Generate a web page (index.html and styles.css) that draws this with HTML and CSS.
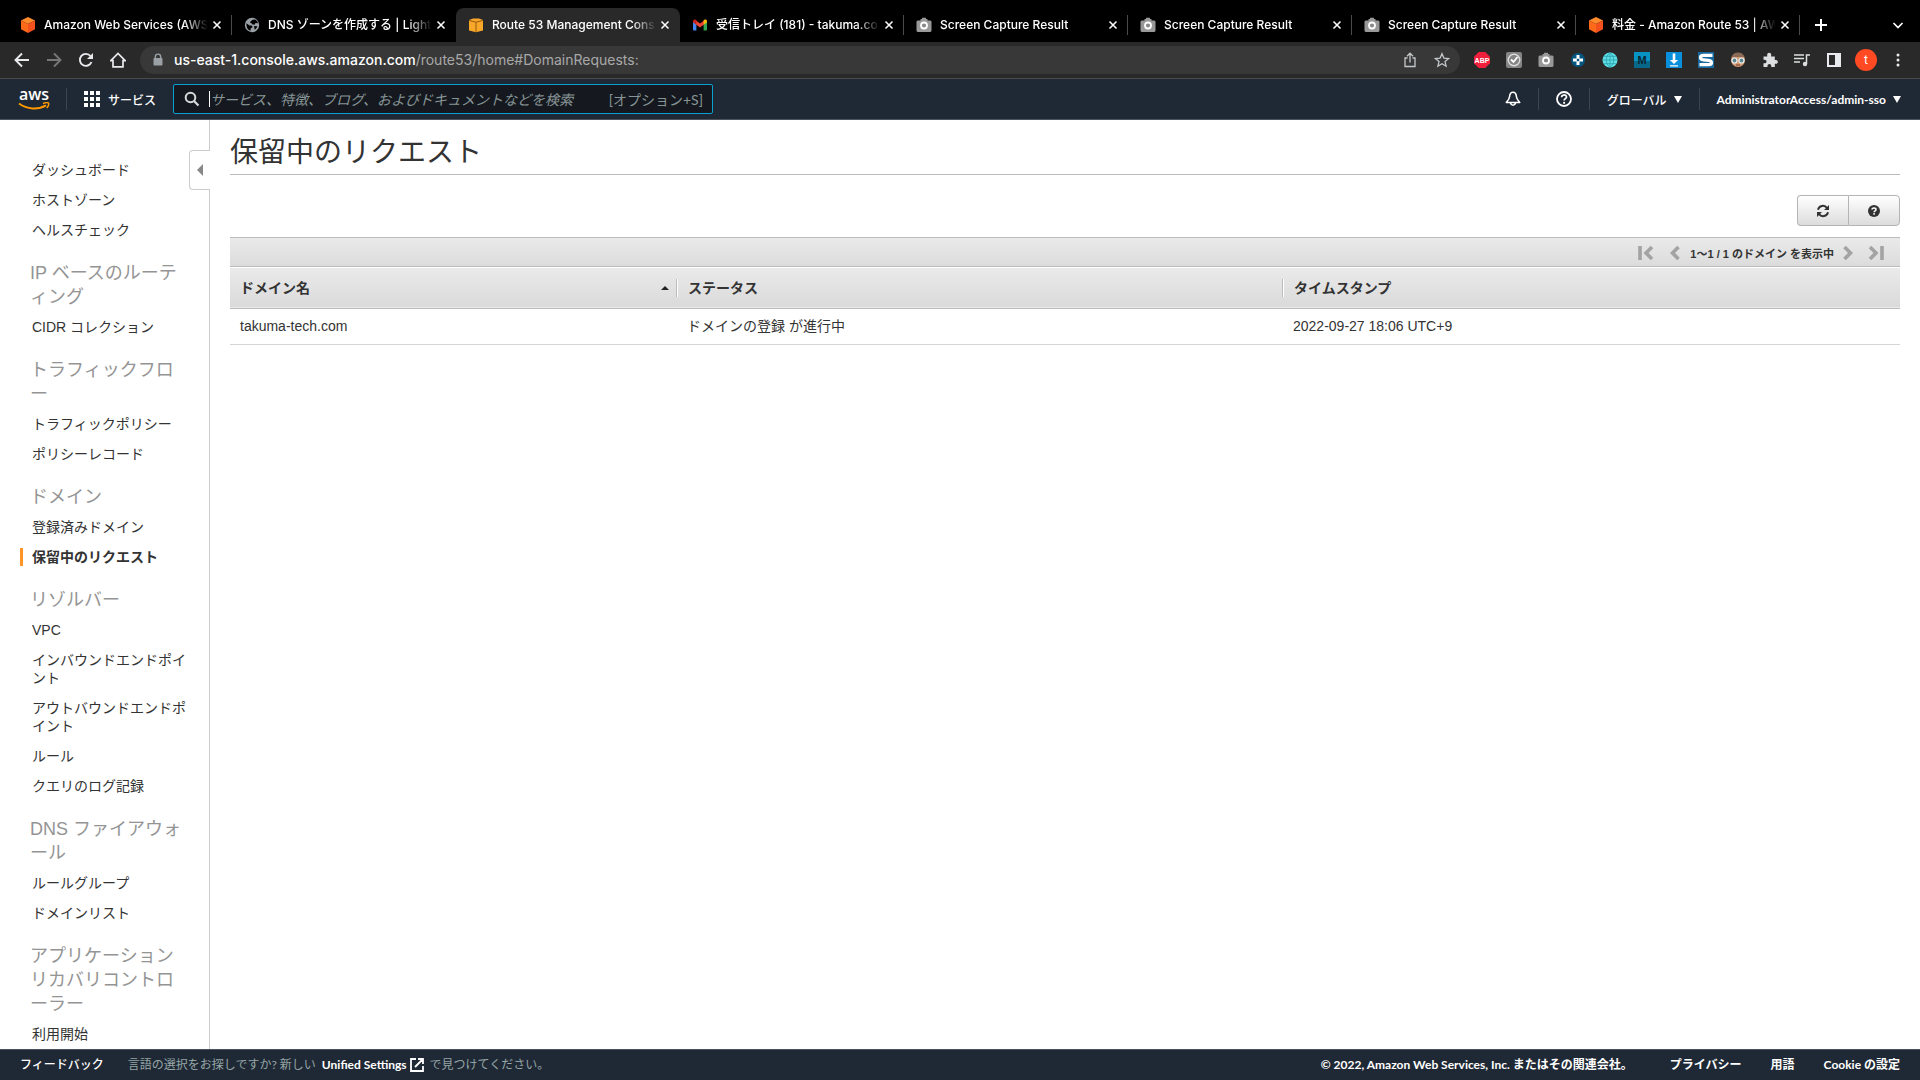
FILE: index.html
```
<!DOCTYPE html>
<html lang="ja">

<head>
    <meta charset="utf-8">
    <title>Route 53 Management Console</title>
    <link rel="stylesheet" href="styles.css">
</head>

<body>
    <svg class="sprite" aria-hidden="true">
        <symbol id="cube" viewBox="0 0 16 16">
            <path fill="#ff8a2b" d="M8 0l7 3.6L8 7 1 3.6z" />
            <path fill="#ff6a1a" d="M1 3.6L8 7v9l-7-3.8z" />
            <path fill="#f4511e" d="M15 3.6L8 7v9l7-3.8z" />
        </symbol>
        <symbol id="globe" viewBox="0 0 16 16">
            <circle cx="8" cy="8" r="7.2" fill="#9aa0a6" />
            <path fill="#000" d="M2.5 6.2l3 2.4h2.2l1 1.6-1.9 1-.3 2.6C3.800 13 2 10.500 2.500 6.200zM6.500 4.600l2-1.800 2.600-.3c1.500.8 2.600 2.200 3 3.800l-2.500-.3-1.100 1.700-2.500-.5-.6-1.200-1.500-.3zM10 9l3.400.3c-.5 1.500-1.400 2.600-2.700 3.400z" />
        </symbol>
        <symbol id="camera" viewBox="0 0 16 16">
            <path fill="#999" d="M1.500 3.500H4.500V2H6V.8h4V2h1.500v1.500h3l1 1V14l-1 1H1.500l-1-1V4.500z" />
            <circle cx="8" cy="8.500" r="3" fill="#888" stroke="#fff" stroke-width="1.800" />
        </symbol>
        <symbol id="close" viewBox="0 0 10 10">
            <path d="M1.500 1.500l7 7M8.500 1.500l-7 7" stroke="#fff" stroke-width="1.500" fill="none" />
        </symbol>
    </svg>

    <div class="tabStrip">
        <div class="tab">
            <svg class="favicon"><use href="#cube" /></svg>
            <span class="tabTitle">Amazon Web Services (AWS</span>
            <button class="tabClose" aria-label="閉じる"><svg><use href="#close" /></svg></button>
        </div>
        <div class="tab tab--beforeActive">
            <svg class="favicon"><use href="#globe" /></svg>
            <span class="tabTitle">DNS ゾーンを作成する | Lights</span>
            <button class="tabClose" aria-label="閉じる"><svg><use href="#close" /></svg></button>
        </div>
        <div class="tab tab--active">
            <svg class="favicon" viewBox="0 0 16 16">
                <path fill="#f9a72b" d="M1 3l4-1.500h6L15 3v10.500l-7 1.700-7-1.700z" />
                <path fill="none" stroke="#8a5208" stroke-width=".9" d="M1 3.500l7 1.700 7-1.700M8 5.200V15" />
            </svg>
            <span class="tabTitle">Route 53 Management Cons</span>
            <button class="tabClose" aria-label="閉じる"><svg><use href="#close" /></svg></button>
        </div>
        <div class="tab">
            <svg class="favicon" viewBox="0 0 16 16">
                <path fill="#4285f4" d="M1 4v8.500a1 1 0 0 0 1 1h2.400V7z" />
                <path fill="#34a853" d="M15 4v8.500a1 1 0 0 1-1 1h-2.400V7z" />
                <path fill="#ea4335" d="M3 2.800L8 6.500l5-3.700v4L8 10.500 3 6.800z" />
                <path fill="#c5221f" d="M1 4.200C1 2.500 2.900 1.800 4.400 3v4.800L1 5.200z" />
                <path fill="#fbbc04" d="M15 4.200c0-1.700-1.900-2.400-3.400-1.200v4.800L15 5.200z" />
            </svg>
            <span class="tabTitle">受信トレイ (181) - takuma.co</span>
            <button class="tabClose" aria-label="閉じる"><svg><use href="#close" /></svg></button>
        </div>
        <div class="tab">
            <svg class="favicon"><use href="#camera" /></svg>
            <span class="tabTitle">Screen Capture Result</span>
            <button class="tabClose" aria-label="閉じる"><svg><use href="#close" /></svg></button>
        </div>
        <div class="tab">
            <svg class="favicon"><use href="#camera" /></svg>
            <span class="tabTitle">Screen Capture Result</span>
            <button class="tabClose" aria-label="閉じる"><svg><use href="#close" /></svg></button>
        </div>
        <div class="tab">
            <svg class="favicon"><use href="#camera" /></svg>
            <span class="tabTitle">Screen Capture Result</span>
            <button class="tabClose" aria-label="閉じる"><svg><use href="#close" /></svg></button>
        </div>
        <div class="tab">
            <svg class="favicon"><use href="#cube" /></svg>
            <span class="tabTitle">料金 - Amazon Route 53 | AW</span>
            <button class="tabClose" aria-label="閉じる"><svg><use href="#close" /></svg></button>
        </div>
        <button class="stripButton" aria-label="新しいタブ">
            <svg width="14" height="14" viewBox="0 0 14 14"><path d="M7 1v12M1 7h12" stroke="#fff" stroke-width="2" /></svg>
        </button>
        <button class="stripButton stripButton--end" aria-label="タブを検索">
            <svg width="12" height="12" viewBox="0 0 12 12"><path d="M1.500 4L6 8.500 10.500 4" stroke="#fff" stroke-width="1.700" fill="none" /></svg>
        </button>
    </div>

    <div class="toolbar">
        <button class="toolButton" aria-label="戻る">
            <svg viewBox="0 0 16 16"><path d="M15 8H2M8 1.500L1.500 8 8 14.500" stroke="#e8eaed" stroke-width="1.900" fill="none" /></svg>
        </button>
        <button class="toolButton" aria-label="進む">
            <svg viewBox="0 0 16 16"><path d="M1 8h13M8 1.500L14.500 8 8 14.500" stroke="#777" stroke-width="1.900" fill="none" /></svg>
        </button>
        <button class="toolButton" aria-label="再読み込み">
            <svg viewBox="0 0 16 16"><path d="M13.500 10A6 6 0 1 1 12.500 4" stroke="#e8eaed" stroke-width="1.900" fill="none" /><path d="M15 1v6H9z" fill="#e8eaed" /></svg>
        </button>
        <button class="toolButton" aria-label="ホーム">
            <svg viewBox="0 0 16 16"><path d="M.8 8.600L8 1.400l7.200 7.200H13v6.200H3V8.600z" stroke="#e8eaed" stroke-width="1.700" fill="none" /></svg>
        </button>
        <div class="omnibox">
            <svg class="lock" width="10" height="14" viewBox="0 0 10 14"><path d="M2.300 6V3.800a2.700 2.700 0 0 1 5.400 0V6" stroke="#9aa0a6" stroke-width="1.400" fill="none" /><rect x=".5" y="5" width="9" height="7.500" rx="1" fill="#9aa0a6" /></svg>
            <span class="url"><b>us-east-1.console.aws.amazon.com</b>/route53/home#DomainRequests:</span>
            <button class="toolButton" aria-label="共有">
                <svg viewBox="0 0 16 16"><path d="M5.500 6H3v8.500h10V6h-2.500M8 10.500V1.500M5 4.200l3-3 3 3" stroke="#c4c7ca" stroke-width="1.300" fill="none" /></svg>
            </button>
            <button class="toolButton" aria-label="ブックマーク">
                <svg viewBox="0 0 16 16"><path d="M8 1.700l1.900 4.400 4.700.4-3.600 3.100 1.100 4.600L8 11.800l-4.100 2.400L5 9.600 1.400 6.500l4.700-.4z" stroke="#c4c7ca" stroke-width="1.300" fill="none" /></svg>
            </button>
        </div>
        <div class="extensions">
            <button class="toolButton" aria-label="ABP">
                <svg viewBox="0 0 16 16"><path fill="#f0203c" d="M4.700 0h6.600L16 4.700v6.600L11.300 16H4.700L0 11.300V4.700z" /><text class="iconText" x="8" y="11" font-size="7" fill="#fff">ABP</text></svg>
            </button>
            <button class="toolButton" aria-label="チェック">
                <svg viewBox="0 0 16 16"><rect width="16" height="16" rx="2" fill="#858585" /><circle cx="8" cy="8" r="5.800" fill="none" stroke="#ddd" stroke-width="1.400" /><path d="M5 7.500L7.500 10l4-5" stroke="#fff" stroke-width="1.800" fill="none" /></svg>
            </button>
            <button class="toolButton" aria-label="キャプチャ"><svg><use href="#camera" /></svg></button>
            <button class="toolButton" aria-label="移動">
                <svg viewBox="0 0 16 16"><circle cx="8" cy="8" r="7" fill="#05557f" /><path fill="#fff" d="M6.500 3h3v3.500H13v3H9.500V13h-3V9.500H3v-3h3.500z" /><rect x="6.800" y="6.800" width="2.400" height="2.400" fill="#05557f" /></svg>
            </button>
            <button class="toolButton" aria-label="地球">
                <svg viewBox="0 0 16 16"><circle cx="8" cy="8" r="7.500" fill="#5fe0e4" /><path d="M.5 8h15M2 4.300h12M2 11.700h12M8 .5v15M8 .5c-5 4.500-5 10.500 0 15M8 .5c5 4.500 5 10.500 0 15" stroke="#2ba0ad" stroke-width=".8" fill="none" /></svg>
            </button>
            <button class="toolButton" aria-label="M">
                <svg viewBox="0 0 16 16"><rect width="16" height="16" fill="#0793c4" /><rect y="9" width="16" height="7" fill="#08688a" /><text class="iconText" x="8" y="12" font-size="11" fill="#0b2530">M</text></svg>
            </button>
            <button class="toolButton" aria-label="ダウンロード">
                <svg viewBox="0 0 16 16"><rect width="16" height="16" fill="#0a8fdc" /><path fill="#fff" d="M6.700 1.500h2.600V8h2.800L8 12 3.900 8h2.800zM4 13.300h8v1.200H4z" /></svg>
            </button>
            <button class="toolButton" aria-label="S">
                <svg viewBox="0 0 16 16"><rect width="16" height="16" fill="#17699f" /><path d="M14.500 3.300H5.500C1.500 3.300 1.500 7.500 5.500 7.800l5 .6c4 .5 4 4.300 0 4.300H1.500" stroke="#fff" stroke-width="3.200" fill="none" /></svg>
            </button>
            <button class="toolButton" aria-label="アバター">
                <svg viewBox="0 0 16 16"><circle cx="8" cy="8" r="7" fill="#d39b74" /><path d="M1.500 5A7 7 0 0 1 14.500 5z" fill="#8a6a55" /><circle cx="4.500" cy="8.500" r="2.500" fill="#5c8790" stroke="#e8eff0" stroke-width="1.200" /><circle cx="11.500" cy="8.500" r="2.500" fill="#5c8790" stroke="#e8eff0" stroke-width="1.200" /><path d="M6 13h4" stroke="#743c30" /></svg>
            </button>
            <button class="toolButton" aria-label="拡張機能">
                <svg viewBox="0 0 16 16"><path fill="#dcdee0" d="M1.500 4.500h3.800C4.600 1.700 6 .8 7.200.8s2.600.9 1.900 3.700h3.700v3.600c2.400-.4 3 .7 3 1.800s-.8 2.200-3 1.800V15H9.300c.3-2.300-.8-3-1.900-3s-2.300.7-1.900 3h-4v-3.700c2.400.3 3-.8 3-1.800s-.7-2-3-1.700z" /></svg>
            </button>
            <button class="toolButton" aria-label="メディア">
                <svg viewBox="0 0 16 16"><path d="M0 3h10M0 6.500h10M0 10h6M12.500 12V3h3.500" stroke="#dcdee0" stroke-width="1.500" fill="none" /><circle cx="11" cy="12" r="2.200" fill="#dcdee0" /></svg>
            </button>
            <button class="toolButton" aria-label="サイドパネル">
                <svg viewBox="0 0 16 16"><path fill="#e8eaed" fill-rule="evenodd" d="M1 1h14v14H1zM3 3v10h6V3z" /></svg>
            </button>
            <button class="avatar">t</button>
            <button class="toolButton" aria-label="メニュー">
                <svg viewBox="0 0 16 16" fill="#e8eaed"><circle cx="8" cy="3" r="1.500" /><circle cx="8" cy="8" r="1.500" /><circle cx="8" cy="13" r="1.500" /></svg>
            </button>
        </div>
    </div>

    <header class="awsHeader">
        <a href="#" class="awsLogo">
            <span>aws</span>
            <svg width="32" height="9" viewBox="0 0 32 9"><path d="M1 1.500c8 6 19 6.500 27 1.800" stroke="#f90" stroke-width="2" fill="none" /><path d="M25 1.500c3-1 5-.9 5.500-.4s.2 2.800-1.700 5" stroke="#f90" stroke-width="1.500" fill="none" /></svg>
        </a>
        <button class="services">
            <svg width="16" height="16" viewBox="0 0 16 16" fill="#fff"><path d="M0 0h4v4H0zM6 0h4v4H6zM12 0h4v4h-4zM0 6h4v4H0zM6 6h4v4H6zM12 6h4v4h-4zM0 12h4v4H0zM6 12h4v4H6zM12 12h4v4h-4z" /></svg>
            サービス
        </button>
        <label class="searchBox">
            <svg width="16" height="16" viewBox="0 0 16 16"><circle cx="6.500" cy="6.500" r="4.800" stroke="#d5dbdb" stroke-width="2" fill="none" /><path d="M10 10l4.500 4.500" stroke="#d5dbdb" stroke-width="2.200" /></svg>
            <span class="caret"></span>
            <input type="text" class="searchInput" aria-label="検索" placeholder="サービス、特徴、ブログ、およびドキュメントなどを検索">
            <span class="shortcut">[オプション+S]</span>
        </label>
        <div class="headerMenu">
            <button class="menuButton" aria-label="通知">
                <svg width="16" height="16" viewBox="0 0 16 16"><path d="M8 1.300c-2.200 0-3.200 1.900-3.400 4.200C4.400 8.200 3 9.500 1.300 11.500h13.400C13 9.500 11.600 8.200 11.400 5.500 11.200 3.200 10.200 1.300 8 1.300zM5.500 12a2.600 3 0 0 0 5 0" stroke="#fff" stroke-width="1.600" fill="none" stroke-linejoin="round" /></svg>
            </button>
            <button class="menuButton" aria-label="サポート">
                <svg width="16" height="16" viewBox="0 0 16 16"><circle cx="8" cy="8" r="7" stroke="#fff" stroke-width="1.800" fill="none" /><path d="M5.600 6.300C5.600 3.200 10.500 3.300 10.500 6c0 1.700-2.400 1.700-2.400 3.600" stroke="#fff" stroke-width="1.700" fill="none" /><circle cx="8.100" cy="11.800" r="1.100" fill="#fff" /></svg>
            </button>
            <button class="menuButton">グローバル <i class="arrow"></i></button>
            <button class="menuButton menuButton--account">AdministratorAccess/admin-sso <i class="arrow"></i></button>
        </div>
    </header>

    <div class="page">
        <nav class="sidebar">
            <button class="sidebarToggle" aria-label="メニューを閉じる"></button>
            <ul>
                <li><a href="#">ダッシュボード</a></li>
                <li><a href="#">ホストゾーン</a></li>
                <li><a href="#">ヘルスチェック</a></li>
            </ul>
            <h2>IP ベースのルーティング</h2>
            <ul>
                <li><a href="#">CIDR コレクション</a></li>
            </ul>
            <h2>トラフィックフロー</h2>
            <ul>
                <li><a href="#">トラフィックポリシー</a></li>
                <li><a href="#">ポリシーレコード</a></li>
            </ul>
            <h2>ドメイン</h2>
            <ul>
                <li><a href="#">登録済みドメイン</a></li>
                <li class="current"><a href="#">保留中のリクエスト</a></li>
            </ul>
            <h2>リゾルバー</h2>
            <ul>
                <li><a href="#">VPC</a></li>
                <li><a href="#">インバウンドエンドポイント</a></li>
                <li><a href="#">アウトバウンドエンドポイント</a></li>
                <li><a href="#">ルール</a></li>
                <li><a href="#">クエリのログ記録</a></li>
            </ul>
            <h2>DNS ファイアウォール</h2>
            <ul>
                <li><a href="#">ルールグループ</a></li>
                <li><a href="#">ドメインリスト</a></li>
            </ul>
            <h2>アプリケーションリカバリコントローラー</h2>
            <ul>
                <li><a href="#">利用開始</a></li>
            </ul>
        </nav>

        <main class="content">
            <h1>保留中のリクエスト</h1>
            <div class="actions">
                <button class="actionButton" aria-label="更新">
                    <svg width="14" height="14" viewBox="0 0 14 14"><path d="M2 5.800A5 5 0 0 1 11 4M12 8.200A5 5 0 0 1 3 10" stroke="#333" stroke-width="2" fill="none" /><path fill="#333" d="M13 1v5H8zM1 13V8h5z" /></svg>
                </button>
                <button class="actionButton" aria-label="ヘルプ">
                    <svg width="14" height="14" viewBox="0 0 14 14"><circle cx="7" cy="7" r="6" fill="#333" /><path d="M5 5.600C5 3.300 9 3.400 9 5.500c0 1.300-1.900 1.300-1.900 2.700" stroke="#fff" stroke-width="1.500" fill="none" /><rect x="6.300" y="9.100" width="1.600" height="1.600" fill="#fff" /></svg>
                </button>
            </div>
            <div class="pager">
                <button class="pagerButton" aria-label="最初"><svg width="16" height="14" viewBox="0 0 16 14"><path d="M2 0v14M14 1L8 7l6 6" stroke="#a3a3a3" stroke-width="3.600" fill="none" /></svg></button>
                <button class="pagerButton" aria-label="前へ"><svg width="10" height="14" viewBox="0 0 10 14"><path d="M8.500 1l-6 6 6 6" stroke="#a3a3a3" stroke-width="3.600" fill="none" /></svg></button>
                <span class="pagerText">1〜1 / 1 のドメイン を表示中</span>
                <button class="pagerButton" aria-label="次へ"><svg width="10" height="14" viewBox="0 0 10 14"><path d="M1.500 1l6 6-6 6" stroke="#a3a3a3" stroke-width="3.600" fill="none" /></svg></button>
                <button class="pagerButton" aria-label="最後"><svg width="16" height="14" viewBox="0 0 16 14"><path d="M14 0v14M2 1l6 6-6 6" stroke="#a3a3a3" stroke-width="3.600" fill="none" /></svg></button>
            </div>
            <table class="requests">
                <thead>
                    <tr>
                        <th class="colDomain"><div class="colHead">ドメイン名<i class="sortArrow"></i></div></th>
                        <th class="colStatus"><div class="colHead">ステータス</div></th>
                        <th><div class="colHead">タイムスタンプ</div></th>
                    </tr>
                </thead>
                <tbody>
                    <tr>
                        <td>takuma-tech.com</td>
                        <td>ドメインの登録 が進行中</td>
                        <td>2022-09-27 18:06 UTC+9</td>
                    </tr>
                </tbody>
            </table>
        </main>
    </div>

    <footer class="awsFooter">
        <a href="#">フィードバック</a>
        <span class="language">言語の選択をお探しですか? 新しい
            <a href="#">Unified Settings<svg width="14" height="14" viewBox="0 0 14 14"><path d="M6 1H1v12h12V8M8 1h5v5M13 1L5 9" stroke="#fff" stroke-width="1.800" fill="none" /></svg></a>
            で見つけてください。</span>
        <div class="legal">
            <span>© 2022, Amazon Web Services, Inc. またはその関連会社。</span>
            <a href="#">プライバシー</a>
            <a href="#">用語</a>
            <a href="#">Cookie の設定</a>
        </div>
    </footer>
</body>

</html>
```
FILE: styles.css
```
* {
    box-sizing: border-box;
}

body {
    margin: 0;
    height: 100vh;
    display: flex;
    flex-direction: column;
    overflow: hidden;
    background-color: #fff;
    color: #333;
    font-family: "Liberation Sans", "Noto Sans CJK JP", sans-serif;
    font-size: 14px;
}

button {
    padding: 0;
    border: none;
    background: none;
    color: inherit;
    font: inherit;
    cursor: pointer;
}

svg {
    display: block;
    flex: none;
}

a {
    color: inherit;
    text-decoration: none;
}

ul {
    list-style: none;
    margin: 0;
    padding: 0;
}

.sprite {
    position: absolute;
    width: 0;
    height: 0;
}

/* browser tabs */
.tabStrip {
    flex: none;
    display: flex;
    align-items: stretch;
    height: 42px;
    padding: 8px 14px 0 8px;
    background-color: #000;
    color: #fff;
    font-family: Inter, "Noto Sans CJK JP", sans-serif;
    font-size: 12px;
    font-weight: 500;
}

.tab {
    position: relative;
    flex: 0 1 224px;
    min-width: 0;
    display: flex;
    align-items: center;
    padding: 0 10px 0 12px;
}

.tab::after {
    content: "";
    position: absolute;
    right: 0;
    top: 7px;
    width: 1px;
    height: 20px;
    background-color: #4a4a4a;
}

.tab--active {
    background-color: #292929;
    border-radius: 8px 8px 0 0;
}

.tab--active::after,
.tab--beforeActive::after {
    display: none;
}

.favicon {
    width: 16px;
    height: 16px;
    margin-right: 8px;
}

.tabTitle {
    flex: 1;
    min-width: 0;
    overflow: hidden;
    white-space: nowrap;
    line-height: 18px;
    -webkit-mask-image: linear-gradient(to right, #000 calc(100% - 24px), transparent);
    mask-image: linear-gradient(to right, #000 calc(100% - 24px), transparent);
}

.tabClose {
    margin-left: 4px;
}

.tabClose svg {
    width: 10px;
    height: 10px;
}

.stripButton {
    margin: 0 14px;
}

.stripButton--end {
    margin: 0 2px 0 auto;
}

/* browser toolbar */
.toolbar {
    flex: none;
    display: flex;
    align-items: center;
    height: 37px;
    padding: 0 14px;
    background-color: #292929;
    border-bottom: 1px solid #4b4b4b;
    color: #fff;
    font-family: Roboto, sans-serif;
}

.toolButton {
    flex: none;
    width: 16px;
    height: 16px;
    margin-right: 16px;
}

.toolButton svg {
    width: 16px;
    height: 16px;
}

.omnibox {
    flex: 1;
    display: flex;
    align-items: center;
    height: 28px;
    margin: 0 14px 0 -2px;
    padding: 0 10px 0 13px;
    border-radius: 14px;
    background-color: #383838;
}

.omnibox .toolButton:last-child {
    margin-right: 0;
}

.url {
    flex: 1;
    margin-left: 11px;
    line-height: 20px;
    color: #a8a8a8;
    font-family: Inter, sans-serif;
}

.url b {
    color: #fff;
    font-weight: 500;
}

.extensions {
    display: flex;
    align-items: center;
}

.extensions .toolButton:last-child {
    margin-right: 0;
}

.iconText {
    font-family: "Liberation Sans", sans-serif;
    font-weight: bold;
    text-anchor: middle;
}

.avatar {
    width: 22px;
    height: 22px;
    margin: 0 13px 0 -3px;
    border-radius: 50%;
    background-color: #ff4a23;
    font-size: 12px;
}

/* console header */
.awsHeader {
    flex: none;
    display: flex;
    align-items: center;
    height: 41px;
    background-color: #1f2935;
    border-bottom: 1px solid #4b525b;
    color: #fff;
    font-family: Lato, "Noto Sans CJK JP", sans-serif;
}

.awsLogo {
    width: 67px;
    height: 22px;
    padding-left: 18px;
    border-right: 1px solid #3a444f;
}

.awsLogo span {
    display: block;
    height: 14px;
    padding-left: 1px;
    font-family: "Open Sans", sans-serif;
    font-size: 16px;
    font-weight: 600;
    line-height: 12px;
}

.services {
    display: flex;
    align-items: center;
    gap: 8px;
    margin-left: 17px;
    font-size: 12px;
    font-weight: 500;
}

.searchBox {
    display: flex;
    align-items: center;
    width: 540px;
    height: 30px;
    margin-left: 17px;
    padding: 0 9px 0 10px;
    border: 1px solid #0aa0cf;
    border-radius: 2px;
    background-color: #15191f;
    color: #879596;
}

.caret {
    width: 1px;
    height: 16px;
    margin-left: 9px;
    background-color: #fff;
}

.searchInput {
    flex: 1;
    min-width: 0;
    padding: 0;
    border: none;
    outline: none;
    background: none;
    color: #fff;
    font: italic 14px/20px "Noto Sans CJK JP", sans-serif;
}

.searchInput::placeholder {
    color: #879596;
}

.headerMenu {
    display: flex;
    align-items: center;
    margin-left: auto;
    padding-right: 19px;
}

.menuButton {
    display: flex;
    align-items: center;
    height: 22px;
    padding: 0 17px;
    border-right: 1px solid #3a444f;
    font-size: 12px;
    font-weight: 500;
}

.menuButton--account {
    padding-right: 0;
    border-right: none;
    font-weight: bold;
}

.arrow {
    margin-left: 7px;
    border: 4px solid transparent;
    border-top: 7px solid #fff;
    border-bottom: none;
}

/* sidebar */
.page {
    flex: 1;
    min-height: 0;
    display: flex;
}

.sidebar {
    position: relative;
    flex: none;
    width: 210px;
    padding: 41px 20px 0 0;
    border-right: 1px solid #ccc;
}

.sidebar li {
    margin-bottom: 12px;
    padding-left: 32px;
    line-height: 18px;
    line-break: loose;
}

.sidebar li:last-child {
    margin-bottom: 0;
}

.sidebar .current {
    margin-left: 20px;
    padding-left: 9px;
    border-left: 3px solid #ff9429;
    font-weight: bold;
}

.sidebar h2 {
    margin: 22px 0 9px 30px;
    color: #949494;
    font-size: 18px;
    font-weight: normal;
    line-height: 24px;
    line-break: loose;
}

.sidebarToggle {
    position: absolute;
    top: 30px;
    right: -1px;
    width: 21px;
    height: 40px;
    border: 1px solid #ccc;
    border-right: none;
    border-radius: 4px 0 0 4px;
    background-color: #fff;
}

.sidebarToggle::before {
    content: "";
    display: block;
    width: 0;
    margin-left: 7px;
    border: 6px solid transparent;
    border-left: none;
    border-right-color: #888;
}

/* main */
.content {
    flex: 1;
    min-width: 0;
    padding: 12px 20px 0;
}

h1 {
    margin: 0 0 20px;
    border-bottom: 1px solid #bbb;
    font-size: 28px;
    font-weight: normal;
    line-height: 42px;
}

.actions {
    display: flex;
    justify-content: flex-end;
    margin-bottom: 11px;
}

.actionButton {
    display: flex;
    align-items: center;
    justify-content: center;
    width: 52px;
    height: 31px;
    border: 1px solid #b4b4b4;
    border-radius: 0 4px 4px 0;
    background-image: linear-gradient(#fff, #dcdcdc);
}

.actionButton:first-child {
    width: 51px;
    border-right: none;
    border-radius: 4px 0 0 4px;
}

.pager {
    display: flex;
    align-items: center;
    justify-content: flex-end;
    height: 30px;
    padding: 2px 16px 0 0;
    border-top: 1px solid #bbb;
    border-bottom: 1px solid #bbb;
    background-image: linear-gradient(#eaeaea, #dcdcdc);
    font-size: 11px;
    font-weight: bold;
}

.pagerText {
    margin: 0 9px 0 10px;
    white-space: nowrap;
}

.pagerButton:first-child {
    margin-right: 16px;
}

.pagerButton:last-child {
    margin-left: 15px;
}

.requests {
    width: 100%;
    margin-top: 1px;
    border-collapse: collapse;
    table-layout: fixed;
}

.requests thead tr {
    height: 40px;
    background-image: linear-gradient(#eaeaea, #dadada);
    border-bottom: 1px solid #bbb;
}

.requests th {
    padding: 0;
    text-align: left;
}

.colDomain {
    width: 447px;
}

.colStatus {
    width: 606px;
}

.colHead {
    display: flex;
    align-items: center;
    height: 18px;
    padding-left: 11px;
    line-height: 18px;
    border-right: 1px solid #bbb;
    box-shadow: 1px 0 #fff;
}

.colDomain .colHead {
    padding-left: 10px;
}

th:last-child .colHead {
    border-right: none;
    box-shadow: none;
}

.sortArrow {
    margin: 0 7px 0 auto;
    border: 4px solid transparent;
    border-top: none;
    border-bottom: 4px solid #222;
}

.requests td {
    height: 36px;
    padding: 0 10px;
    border-bottom: 1px solid #d5d5d5;
    line-height: 20px;
}

/* console footer */
.awsFooter {
    flex: none;
    display: flex;
    align-items: center;
    height: 31px;
    padding: 0 20px;
    background-color: #1f2935;
    border-top: 1px solid #4b525b;
    color: #fff;
    font-family: Lato, "Noto Sans CJK JP", sans-serif;
    font-size: 12px;
    font-weight: 500;
    line-height: 18px;
}

.language {
    display: flex;
    gap: 6px;
    margin-left: 24px;
    color: #95a5a6;
    font-weight: normal;
}

.language a {
    display: flex;
    align-items: center;
    gap: 3px;
    color: #fff;
    font-weight: bold;
}

.legal {
    display: flex;
    gap: 29px;
    margin-left: auto;
    font-weight: bold;
}

.legal span {
    margin-right: 8px;
}
```
